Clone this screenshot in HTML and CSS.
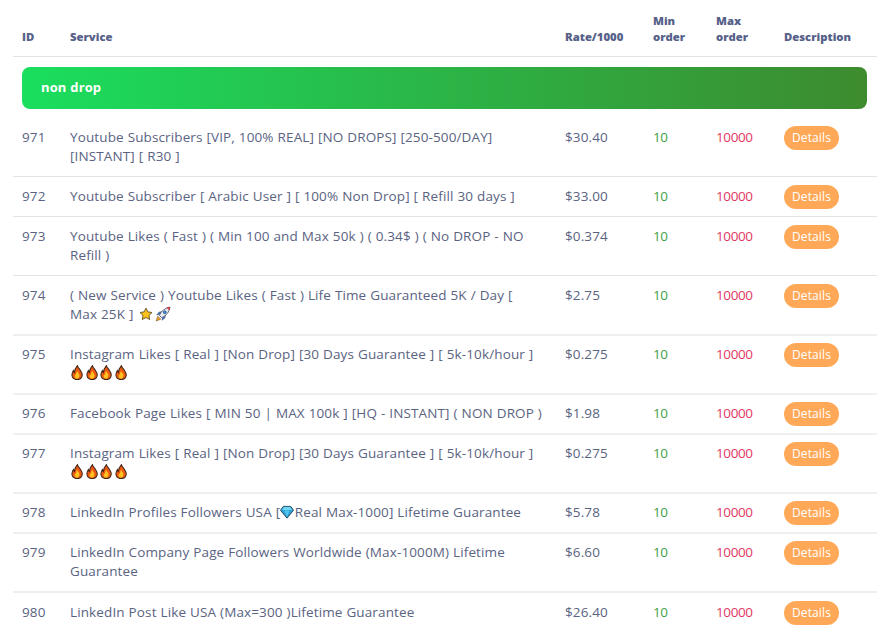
FILE: index.html
```html
<!DOCTYPE html>
<html lang="en">
<head>
<meta charset="utf-8">
<title>Services</title>
<link rel="stylesheet" href="styles.css">
</head>
<body>
<svg class="defs" width="0" height="0" aria-hidden="true">
  <defs>
    <symbol id="fire" viewBox="0 0 14 16" preserveAspectRatio="none">
      <path d="M7.500.6c.5 2.300 2.100 3.300 3.400 5 1.500 1.900 2.400 3.400 2.200 5.400-.3 2.700-2.700 4.500-6 4.500s-5.700-1.800-6-4.500C.9 9 1.700 7.300 2.800 6c.2 1 .5 1.600 1.200 2C4.300 5 5.700 2.400 7.500.6z" fill="#ec5a12" stroke="#3d2418" stroke-width="1.200"/>
      <path d="M7.300 6.200c.3 1.400 1.500 2.200 2.200 3.500.8 1.700.3 3.500-1 4.500-.9.600-2.200.600-3.100 0-1.200-1-1.500-2.800-.6-4.300.2.500.5.800.9 1 0-1.700.6-3.500 1.600-4.700z" fill="#ffc21f"/>
    </symbol>
    <symbol id="star" viewBox="0 0 16 16">
      <path d="M8 1.300l2.100 4.300 4.700.7-3.400 3.300.8 4.700L8 12l-4.200 2.300.8-4.700L1.200 6.300l4.700-.7z" fill="#fcc21b" stroke="#5c4a20" stroke-width="1" stroke-linejoin="round"/>
    </symbol>
    <symbol id="rocket" viewBox="0 0 16 16">
      <path d="M2.800 10.200L1 15l4.800-1.800z" fill="#f4a02a" stroke="#6b4a20" stroke-width=".5"/>
      <path d="M4.200 8.200L1.800 9 4 6.200l2.800-.5zM7.800 11.800l-.8 2.400 2.900-2.400.4-2.800z" fill="#3a7fd0" stroke="#2a3f70" stroke-width=".6"/>
      <path d="M4.300 9.300C6.300 5 10 1.800 15 1c-.6 5-3.800 8.600-8.200 10.700z" fill="#e6ebf2" stroke="#3d4760" stroke-width=".8"/>
      <path d="M11.600 1.700L15 1c-.1 1.200-.3 2.300-.8 3.500z" fill="#e0343c"/>
      <circle cx="9.800" cy="6.200" r="1.500" fill="#3a8fe0" stroke="#2c4565" stroke-width=".6"/>
    </symbol>
    <symbol id="gem" viewBox="0 0 16 16">
      <path d="M3.800 1.600h8.400L15.500 6 8 15 .5 6z" fill="#2f9fd8" stroke="#1d3f55" stroke-width="1" stroke-linejoin="round"/>
      <path d="M4.600 2.400h6.800l2.300 3.200H2.300z" fill="#6fd8f2"/>
      <path d="M5 6.200L8 13.800 11 6.200z" fill="#50c6ee"/>
    </symbol>
  </defs>
</svg>
<table class="services">
  <colgroup>
    <col class="c-id"><col class="c-service"><col class="c-rate"><col class="c-min"><col class="c-max"><col class="c-desc">
  </colgroup>
  <thead>
    <tr>
      <th>ID</th><th>Service</th><th>Rate/1000</th><th>Min order</th><th>Max order</th><th>Description</th>
    </tr>
  </thead>
  <tbody>
    <tr class="group"><td colspan="6"><div class="group-bar">non drop</div></td></tr>
    <tr><td>971</td><td>Youtube Subscribers [VIP, 100% REAL] [NO DROPS] [250-500/DAY]<br>[INSTANT] [ R30 ]</td><td>$30.40</td><td class="min">10</td><td class="max">10000</td><td><a class="details">Details</a></td></tr>
    <tr><td>972</td><td>Youtube Subscriber [ Arabic User ] [ 100% Non Drop] [ Refill 30 days ]</td><td>$33.00</td><td class="min">10</td><td class="max">10000</td><td><a class="details">Details</a></td></tr>
    <tr><td>973</td><td>Youtube Likes ( Fast ) ( Min 100 and Max 50k ) ( 0.34$ ) ( No DROP - NO<br>Refill )</td><td>$0.374</td><td class="min">10</td><td class="max">10000</td><td><a class="details">Details</a></td></tr>
    <tr class="thick first"><td>974</td><td>( New Service ) Youtube Likes ( Fast ) Life Time Guaranteed 5K / Day [<br>Max 25K ] <svg class="emoji star"><use href="#star"/></svg><svg class="emoji wide"><use href="#rocket"/></svg></td><td>$2.75</td><td class="min">10</td><td class="max">10000</td><td><a class="details">Details</a></td></tr>
    <tr class="thick"><td>975</td><td>Instagram Likes [ Real ] [Non Drop] [30 Days Guarantee ] [ 5k-10k/hour ]<br><svg class="emoji fire"><use href="#fire"/></svg><svg class="emoji fire"><use href="#fire"/></svg><svg class="emoji fire"><use href="#fire"/></svg><svg class="emoji fire"><use href="#fire"/></svg></td><td>$0.275</td><td class="min">10</td><td class="max">10000</td><td><a class="details">Details</a></td></tr>
    <tr class="thick"><td>976</td><td>Facebook Page Likes [ MIN 50 | MAX 100k ] [HQ - INSTANT] ( NON DROP )</td><td>$1.98</td><td class="min">10</td><td class="max">10000</td><td><a class="details">Details</a></td></tr>
    <tr class="thick"><td>977</td><td>Instagram Likes [ Real ] [Non Drop] [30 Days Guarantee ] [ 5k-10k/hour ]<br><svg class="emoji fire"><use href="#fire"/></svg><svg class="emoji fire"><use href="#fire"/></svg><svg class="emoji fire"><use href="#fire"/></svg><svg class="emoji fire"><use href="#fire"/></svg></td><td>$0.275</td><td class="min">10</td><td class="max">10000</td><td><a class="details">Details</a></td></tr>
    <tr class="thick"><td>978</td><td>LinkedIn Profiles Followers USA [<svg class="emoji"><use href="#gem"/></svg>Real Max-1000] Lifetime Guarantee</td><td>$5.78</td><td class="min">10</td><td class="max">10000</td><td><a class="details">Details</a></td></tr>
    <tr class="thick"><td>979</td><td>LinkedIn Company Page Followers Worldwide (Max-1000M) Lifetime<br>Guarantee</td><td>$6.60</td><td class="min">10</td><td class="max">10000</td><td><a class="details">Details</a></td></tr>
    <tr class="thick last"><td>980</td><td>LinkedIn Post Like USA (Max=300 )Lifetime Guarantee</td><td>$26.40</td><td class="min">10</td><td class="max">10000</td><td><a class="details">Details</a></td></tr>
  </tbody>
</table>
</body>
</html>
```
FILE: styles.css
```css
html, body {
  margin: 0;
  padding: 0;
  background: #fff;
  height: 630px;
  overflow: hidden;
}
body {
  padding-left: 13px;
  font-family: "Open Sans", "Noto Sans", sans-serif;
  color: #5a6382;
}
.defs { position: absolute; }
.services {
  width: 864px;
  table-layout: fixed;
  border-collapse: separate;
  border-spacing: 0;
  font-size: 13.500px;
  line-height: 19px;
  letter-spacing: .12px;
  word-spacing: .3px;
}
.c-id { width: 48px; }
.c-service { width: 495px; }
.c-rate { width: 88px; }
.c-min { width: 63px; }
.c-max { width: 68px; }
.services th {
  padding: 13px 9px 11px;
  text-align: left;
  vertical-align: bottom;
  font-size: 11.300px;
  font-weight: 800;
  line-height: 16px;
  letter-spacing: 0;
  color: #566189;
  border-bottom: 1px solid #e2e3e8;
}
.services td {
  padding: 10px 9px;
  vertical-align: top;
  border-bottom: 1px solid #e4e4e8;
}
.services .thick td {
  padding-top: 9px;
  padding-bottom: 10px;
  border-bottom: 2px solid #eeeff1;
}
.services .thick.first td,
.services .thick.last td { padding-top: 10px; }
.services .group td {
  padding: 10px 10px 9px 9px;
  border-bottom: 0;
}
.group-bar {
  height: 42px;
  box-sizing: border-box;
  padding: 0 19px;
  border-radius: 8px;
  background: linear-gradient(90deg, #1ade5e, #3d8b2e);
  color: #fff;
  font-size: 13px;
  font-weight: 700;
  line-height: 40px;
}
.services .min { color: #3f9f46; letter-spacing: -.4px; }
.services .max { color: #e2385f; letter-spacing: -.4px; }
.details {
  display: block;
  width: 55px;
  height: 24px;
  margin: -2px 0 -3px;
  border-radius: 12px;
  background: #ffa958;
  color: #fff;
  font-size: 12px;
  line-height: 24px;
  text-align: center;
}
.emoji {
  width: 14px;
  height: 16px;
  vertical-align: -3px;
  margin-right: .5px;
}
.emoji.wide { width: 16px; }
.emoji.star { margin: 0 2px; }
.emoji.fire {
  width: 12px;
  height: 15px;
  margin: 0 1.250px;
  vertical-align: -2px;
}
```
